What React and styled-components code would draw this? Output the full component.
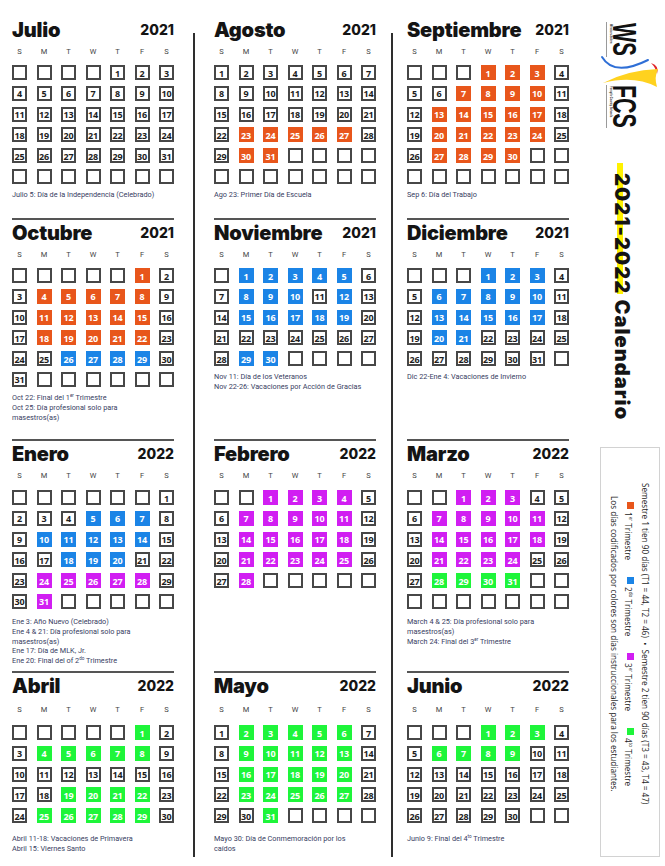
import React from 'react';
import styled, {createGlobalStyle} from 'styled-components';

const GlobalStyle = createGlobalStyle`
    html, body {
        margin: 0;
        padding: 0;
        background: #fff;
    }
    body {
        font-family: Roboto, "Liberation Sans", sans-serif;
        color: #1a1a1a;
    }
`

const COLORS = {
    o: '#e8561b',
    b: '#1b84e6',
    m: '#d11ef2',
    g: '#1ef53a',
}

const dots = n => '.'.repeat(n)

// codes: one char per day -> '.' plain day, o/b/m/g = trimestre colour
const MONTHS = [
    {name: 'Julio', year: 2021, start: 4, rows: 6, codes: dots(31),
        notes: [['Julio 5: Día de la Independencia (Celebrado)']]},
    {name: 'Agosto', year: 2021, start: 0, rows: 6, codes: dots(22) + 'ooooo' + '..' + 'oo',
        notes: [['Ago 23: Primer Día de Escuela']]},
    {name: 'Septiembre', year: 2021, start: 3, rows: 6,
        codes: 'ooo' + '...' + 'oooo' + '..' + 'ooooo' + '..' + 'ooooo' + '..' + 'oooo',
        notes: [['Sep 6: Día del Trabajo']]},

    {name: 'Octubre', year: 2021, start: 5, rows: 6,
        codes: 'o' + '..' + 'ooooo' + '..' + 'ooooo' + '..' + 'ooooo' + '...' + 'bbbb' + '..',
        notes: [['Oct 22: Final del 1', ['er'], ' Trimestre'], ['Oct 25: Día profesional solo para'], ['masestros(as)']]},
    {name: 'Noviembre', year: 2021, start: 1, rows: 5,
        codes: 'bbbbb' + '..' + 'bbb' + '.' + 'b' + '..' + 'bbbbb' + dots(9) + 'bb',
        notes: [['Nov 11: Día de los Veteranos'], ['Nov 22-26: Vacaciones por Acción de Gracias']]},
    {name: 'Diciembre', year: 2021, start: 3, rows: 5,
        codes: 'bbb' + '..' + 'bbbbb' + '..' + 'bbbbb' + '..' + 'bb' + dots(10),
        notes: [['Dic 22-Ene 4: Vacaciones de Invierno']]},

    {name: 'Enero', year: 2022, start: 6, rows: 6,
        codes: '....' + 'bbb' + '..' + 'bbbbb' + '...' + 'bbb' + '...' + 'mmmmm' + '..' + 'm',
        notes: [
            ['Ene 3: Año Nuevo (Celebrado)'],
            ['Ene 4 & 21: Día profesional solo para'],
            ['masestros(as)'],
            ['Ene 17: Día de MLK, Jr.'],
            ['Ene 20: Final del of 2', ['do'], ' Trimestre'],
        ]},
    {name: 'Febrero', year: 2022, start: 2, rows: 5,
        codes: 'mmmm' + '..' + 'mmmmm' + '..' + 'mmmmm' + '..' + 'mmmmm' + '..' + 'm',
        notes: []},
    {name: 'Marzo', year: 2022, start: 2, rows: 6,
        codes: 'mmm' + '...' + 'mmmmm' + '..' + 'mmmmm' + '..' + 'mmmm' + '...' + 'gggg',
        notes: [['March 4 & 25: Día profesional solo para'], ['masestros(as)'], ['March 24: Final del 3', ['er'], ' Trimestre']]},

    {name: 'Abril', year: 2022, start: 5, rows: 5,
        codes: 'g' + '..' + 'ggggg' + dots(10) + 'gggg' + '..' + 'ggggg' + '.',
        notes: [['Abril 11-18: Vacaciones de Primavera'], ['Abril 15: Viernes Santo']]},
    {name: 'Mayo', year: 2022, start: 0, rows: 5,
        codes: '.' + 'ggggg' + '..' + 'ggggg' + '..' + 'ggggg' + '..' + 'ggggg' + '...' + 'g',
        notes: [['Mayo 30: Día de Conmemoración por los'], ['caídos']]},
    {name: 'Junio', year: 2022, start: 3, rows: 5,
        codes: 'ggg' + '..' + 'gggg' + dots(21),
        notes: [['Junio 9: Final del 4', ['to'], ' Trimestre']]},
]

const WEEK = ['S', 'M', 'T', 'W', 'T', 'F', 'S']

// small per-row spacing differences in the print
const CELLS_GAP = [8, 8, 9, 10]
const NOTES_GAP = [6, 6, 8, 11]

const Page = styled.div`
    width: 665px;
    height: 866px;
    box-sizing: border-box;
    padding: 15px 0 0 12px;
    display: flex;
    overflow: hidden;
`

const Board = styled.div`
    display: grid;
    grid-template-columns: 162px 40px 162px 31px 162px;
    grid-template-rows: 203px 221px 232px 1fr;
`

const Divider = styled.div`
    grid-column: ${p => p.$col};
    grid-row: 1 / 5;
    justify-self: center;
    width: 2px;
    background: #2e2e2e;
    margin: 18px 0 9px;
`

const MonthBlock = styled.section`
    display: flex;
    flex-direction: column;
    border-top: 2px solid ${p => p.$row === 0 ? 'transparent' : '#555'};
`

const Head = styled.div`
    display: flex;
    justify-content: space-between;
    align-items: flex-start;
    height: 24px;
    margin-top: 1px;
`

const MonthName = styled.h2`
    margin: 0;
    font: 900 20px/24px Inter, "Liberation Sans", sans-serif;
    letter-spacing: -0.2px;
    color: #141414;
`

const Year = styled.span`
    margin-top: 4px;
    font: 800 14px/16px Inter, "Liberation Sans", sans-serif;
    color: #141414;
`

const WeekRow = styled.div`
    display: grid;
    grid-template-columns: repeat(7, 15px);
    column-gap: 9.5px;
    margin-top: ${p => p.$row === 3 ? 7 : 5}px;
    font: 400 7.5px/10px Roboto, sans-serif;
    color: #444;
    text-align: center;
`

const DayGrid = styled.div`
    display: grid;
    grid-template-columns: repeat(7, 15px);
    grid-auto-rows: 15px;
    column-gap: 9.5px;
    row-gap: 5.8px;
    margin-top: ${p => CELLS_GAP[p.$row]}px;
`

const Cell = styled.div`
    box-sizing: border-box;
    display: flex;
    align-items: center;
    justify-content: center;
    padding-top: 1px;
    font: 700 9px/1 "Open Sans", Roboto, sans-serif;
    letter-spacing: -0.2px;
    color: ${p => COLORS[p.$code] ? '#fff' : '#1d1d1d'};
    background: ${p => COLORS[p.$code] || '#fff'};
    border: ${p => COLORS[p.$code] ? 'none' : '2px solid #474747'};
`

const Notes = styled.div`
    margin-top: ${p => NOTES_GAP[p.$row]}px;
    font: 400 7.3px/9.8px Roboto, sans-serif;
    color: #38405f;
    white-space: nowrap;
`

const Sup = styled.sup`
    font-size: 4.6px;
    line-height: 0;
    vertical-align: 3px;
`

const Side = styled.aside`
    margin-left: 29px;
    width: 64px;
    display: flex;
    flex-direction: column;
    align-items: flex-start;
    box-sizing: border-box;
    padding: 2px 0 9px;
`

const LogoSvg = styled.svg`
    display: block;
    flex: none;
`

const BigTitle = styled.h1`
    margin: 10px 0 0 12px;
    writing-mode: vertical-rl;
    font: 900 20px/24px Inter, "Liberation Sans", sans-serif;
    letter-spacing: 1.1px;
    color: #141414;
    white-space: nowrap;
`

const Highlight = styled.span`
    padding-top: 10px;
    background: linear-gradient(to right, transparent 30%, #fff200 30%, #fff200 54%, transparent 54%);
`

const Legend = styled.div`
    margin: auto 0 0 2px;
    width: 60px;
    height: 410px;
    box-sizing: border-box;
    border: 1px solid #d2d2d2;
    writing-mode: vertical-rl;
    text-align: center;
    padding: 14px 7px 30px 0;
    font: 400 8.2px/14px "Open Sans", sans-serif;
    color: #1c1c1c;
    white-space: nowrap;
`

const LegendLine = styled.div``

const LegendKeys = styled.div`
    margin-right: 3px;
`

const Key = styled.span`
    margin-inline-end: 17px;
    &:last-child {
        margin-inline-end: 0;
    }
`

const Swatch = styled.span`
    display: inline-block;
    width: 7px;
    height: 7px;
    margin-inline-end: 3px;
    vertical-align: middle;
    background: ${p => p.$c};
`

const logoFont = "'Liberation Sans', Arial, sans-serif"

const Logo = () => (
    <LogoSvg width="62" height="136" viewBox="0 0 62 136">
        <text transform="translate(15 6) rotate(90) scale(0.62 1)" fontFamily={logoFont}
            fontWeight="700" fontSize="33" fill="#111">WS</text>
        <text transform="translate(15 68) rotate(90) scale(0.65 1)" fontFamily={logoFont}
            fontWeight="700" fontSize="33" fill="#111">FCS</text>
        <text transform="translate(12 7) rotate(90) scale(0.8 1)" fontFamily={logoFont}
            fontWeight="700" fontSize="3.4" fill="#333">Winston-Salem</text>
        <text transform="translate(12 69) rotate(90) scale(0.8 1)" fontFamily={logoFont}
            fontWeight="700" fontSize="3.4" fill="#333">Forsyth County Schools</text>
        <line x1="8.5" y1="5" x2="8.5" y2="40" stroke="#555" strokeWidth="0.6"/>
        <line x1="8.5" y1="68" x2="8.5" y2="111" stroke="#555" strokeWidth="0.6"/>
        <path d="M4 40 Q16 60 50 43" fill="none" stroke="#2f6fd6" strokeWidth="2" strokeLinecap="round"/>
        <path d="M53 46 Q62 49 59 57 Q58 51 53 46 Z" fill="#e0262b"/>
        <path d="M5 66 Q30 53 60 52 Q56 60 59 70 Q36 58 5 66 Z" fill="#ffd21f"/>
    </LogoSvg>
)

const Month = ({month, row}) => {
    const cells = []
    const total = month.rows * 7
    for (let i = 0; i < total; i++) {
        const day = i - month.start + 1
        const inMonth = day >= 1 && day <= month.codes.length
        cells.push(
            <Cell key={i} $code={inMonth ? month.codes[day - 1] : null}>
                {inMonth ? day : ''}
            </Cell>
        )
    }

    return (
        <MonthBlock $row={row}>
            <Head>
                <MonthName>{month.name}</MonthName>
                <Year>{month.year}</Year>
            </Head>
            <WeekRow $row={row}>
                {WEEK.map((d, i) => <span key={i}>{d}</span>)}
            </WeekRow>
            <DayGrid $row={row}>{cells}</DayGrid>
            {month.notes.length > 0 ?
                <Notes $row={row}>
                    {month.notes.map((line, i) => (
                        <div key={i}>
                            {line.map((part, j) => Array.isArray(part) ? <Sup key={j}>{part[0]}</Sup> : part)}
                        </div>
                    ))}
                </Notes>
                : null}
        </MonthBlock>
    )
}

export default function App() {
    return (
        <>
            <GlobalStyle/>
            <Page>
                <Board>
                    <Divider $col={2}/>
                    <Divider $col={4}/>
                    {MONTHS.map((m, i) => <Month key={m.name} month={m} row={Math.floor(i / 3)}/>)}
                </Board>

                <Side>
                    <Logo/>
                    <BigTitle><Highlight>2021-2022</Highlight> Calendario</BigTitle>
                    <Legend>
                        <LegendLine>
                            Semestre 1 tien 90 días (T1 = 44, T2 = 46) &nbsp;•&nbsp; Semestre 2 tien 90 días (T3 = 43, T4 = 47)
                        </LegendLine>
                        <LegendKeys>
                            <Key><Swatch $c={COLORS.o}/>1<Sup>er</Sup> Trimestre</Key>
                            <Key><Swatch $c={COLORS.b}/>2<Sup>do</Sup> Trimestre</Key>
                            <Key><Swatch $c={COLORS.m}/>3<Sup>er</Sup> Trimestre</Key>
                            <Key><Swatch $c={COLORS.g}/>4<Sup>to</Sup> Trimestre</Key>
                        </LegendKeys>
                        <LegendLine>
                            Los días codificados por colores son días instruccionales para los estudiantes.
                        </LegendLine>
                    </Legend>
                </Side>
            </Page>
        </>
    )
}
